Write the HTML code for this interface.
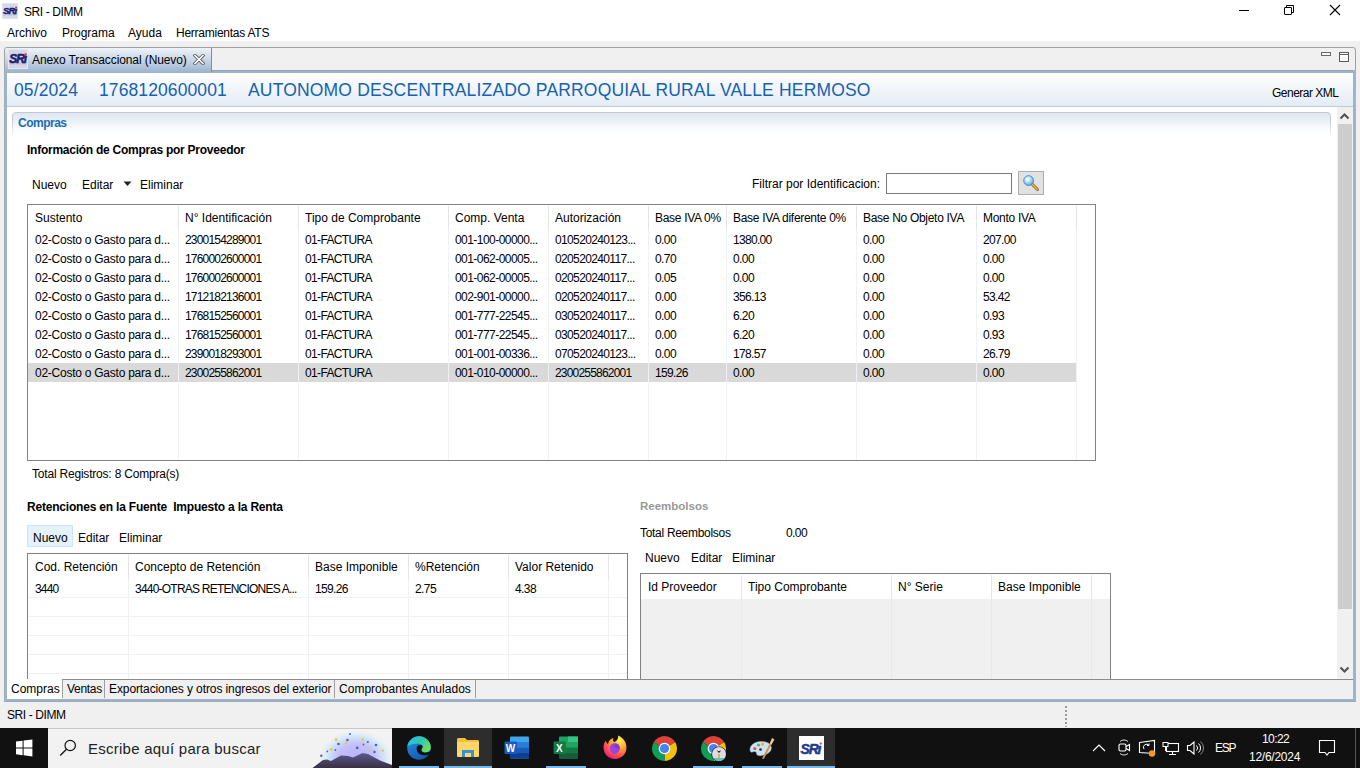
<!DOCTYPE html>
<html><head><meta charset="utf-8"><title>SRI - DIMM</title>
<style>
html,body{margin:0;padding:0;}
body{width:1360px;height:768px;position:relative;overflow:hidden;background:#f0f0f0;font-family:"Liberation Sans", sans-serif;}
.t{position:absolute;white-space:pre;font-family:"Liberation Sans", sans-serif;}
.b{position:absolute;}
</style></head><body>
<div class="b" style="left:0px;top:0px;width:1360px;height:41px;background:#fff"></div>
<svg class="b" style="left:2px;top:3px" width="16" height="16" viewBox="0 0 20 20"><rect x="0" y="0" width="20" height="20" fill="#d8d8e8"/><rect x="0.5" y="0.5" width="19" height="19" fill="none" stroke="#e6e6f2" stroke-width="1"/><rect x="1" y="13.5" width="18" height="2" fill="#c4c4dc"/><text x="1.3" y="13.6" font-family="Liberation Sans" font-weight="bold" font-style="italic" font-size="12" fill="#1c1f72" stroke="#1c1f72" stroke-width="0.55" letter-spacing="-1.1">SRı</text><circle cx="17.6" cy="5.6" r="1.3" fill="#d83838"/></svg>
<div class="t" style="left:24px;top:5.84px;font-size:12px;line-height:12px;font-weight:normal;color:#000;letter-spacing:-0.400px;">SRI - DIMM</div>
<div class="b" style="left:1239px;top:10px;width:10px;height:1px;background:#000"></div>
<svg class="b" style="left:1283px;top:4px" width="12" height="12" viewBox="0 0 12 12"><rect x="1.5" y="3.5" width="7" height="7" rx="0.5" fill="none" stroke="#000" stroke-width="1"/><path d="M3.5 3V1.5H10.5V8.5H9" fill="none" stroke="#000" stroke-width="1"/></svg>
<svg class="b" style="left:1329px;top:4px" width="12" height="12" viewBox="0 0 12 12"><path d="M1 1L11 11M11 1L1 11" fill="none" stroke="#000" stroke-width="1.1"/></svg>
<div class="t" style="left:7px;top:26.84px;font-size:12px;line-height:12px;font-weight:normal;color:#000;">Archivo</div>
<div class="t" style="left:62px;top:26.84px;font-size:12px;line-height:12px;font-weight:normal;color:#000;">Programa</div>
<div class="t" style="left:128px;top:26.84px;font-size:12px;line-height:12px;font-weight:normal;color:#000;">Ayuda</div>
<div class="t" style="left:176px;top:26.84px;font-size:12px;line-height:12px;font-weight:normal;color:#000;letter-spacing:-0.250px;">Herramientas ATS</div>
<div class="b" style="left:4px;top:47px;width:1352px;height:655px;border:1px solid #a0a0a0;border-radius:3px 3px 0 0;background:#f0f0f0;box-sizing:border-box"></div>
<div class="b" style="left:5px;top:70px;width:1350px;height:3px;background:linear-gradient(#94a3b6 0,#94a3b6 1px,#9eb3cc 1px)"></div>
<div class="b" style="left:5px;top:48px;width:206px;height:24px;background:linear-gradient(#eef3f9,#c4d4e6 55%,#9db4cf);border-right:1px solid #8a8a8a;border-radius:3px 0 0 0"></div>
<svg class="b" style="left:8px;top:49px" width="20" height="20" viewBox="0 0 20 20"><rect x="0" y="0" width="20" height="20" fill="#d6d6e2"/><rect x="0.5" y="0.5" width="19" height="19" fill="none" stroke="#e6e6f2" stroke-width="1"/><rect x="1" y="13.5" width="18" height="2" fill="#c4c4dc"/><text x="1.3" y="13.6" font-family="Liberation Sans" font-weight="bold" font-style="italic" font-size="12" fill="#1c1f72" stroke="#1c1f72" stroke-width="0.55" letter-spacing="-1.1">SRı</text><circle cx="17.6" cy="5.6" r="1.3" fill="#d83838"/></svg>
<div class="t" style="left:32px;top:53.84px;font-size:12px;line-height:12px;font-weight:normal;color:#000;letter-spacing:-0.100px;">Anexo Transaccional (Nuevo)</div>
<svg class="b" style="left:193px;top:54px" width="12" height="11" viewBox="0 0 12 11"><path d="M2 1.5L10 9.5M10 1.5L2 9.5" stroke="#555" stroke-width="3.2" stroke-linecap="square"/><path d="M2 1.5L10 9.5M10 1.5L2 9.5" stroke="#fff" stroke-width="1.6" stroke-linecap="square"/></svg>
<div class="b" style="left:1321px;top:52px;width:10px;height:4px;border:1px solid #6a6a6a;box-sizing:border-box;background:#f6f6f6"></div>
<div class="b" style="left:1339px;top:52px;width:10px;height:10px;border:1px solid #5a5a5a;box-sizing:border-box;background:linear-gradient(#fff 0,#fff 1px,#5a5a5a 1px,#5a5a5a 2px,#fff 2px)"></div>
<div class="b" style="left:4px;top:70px;width:3px;height:632px;background:#9eb3cc;border-left:1px solid #a3adb8;box-sizing:border-box"></div>
<div class="b" style="left:1353px;top:70px;width:3px;height:632px;background:#9eb3cc"></div>
<div class="b" style="left:4px;top:699px;width:1352px;height:3px;background:linear-gradient(#a4b6cc,#98a9be)"></div>
<div class="b" style="left:7px;top:73px;width:1346px;height:626px;background:#fff"></div>
<div class="b" style="left:7px;top:73px;width:1346px;height:33px;background:linear-gradient(#ffffff,#f4f7fb 40%,#e4ebf3)"></div>
<div class="b" style="left:7px;top:106px;width:1346px;height:1px;background:#c0ccda"></div>
<div class="t" style="left:14px;top:82.19px;font-size:17.5px;line-height:17.5px;font-weight:normal;color:#1562b0;letter-spacing:0.100px;">05/2024</div>
<div class="t" style="left:99px;top:82.19px;font-size:17.5px;line-height:17.5px;font-weight:normal;color:#1562b0;letter-spacing:0.100px;">1768120600001</div>
<div class="t" style="left:248px;top:82.19px;font-size:17.5px;line-height:17.5px;font-weight:normal;color:#1562b0;letter-spacing:0.170px;">AUTONOMO DESCENTRALIZADO PARROQUIAL RURAL VALLE HERMOSO</div>
<div class="t" style="left:1272px;top:86.84px;font-size:12px;line-height:12px;font-weight:normal;color:#000;letter-spacing:-0.500px;">Generar XML</div>
<div class="b" style="left:1337px;top:107px;width:16px;height:572px;background:#f0f0f0"></div>
<div class="b" style="left:1338px;top:124px;width:14px;height:485px;background:#cdcdcd"></div>
<svg class="b" style="left:1339px;top:112px" width="11" height="8" viewBox="0 0 11 8"><path d="M1.5 6.5L5.5 2.5L9.5 6.5" fill="none" stroke="#505050" stroke-width="2"/></svg>
<svg class="b" style="left:1339px;top:666px" width="11" height="8" viewBox="0 0 11 8"><path d="M1.5 1.5L5.5 5.5L9.5 1.5" fill="none" stroke="#505050" stroke-width="2"/></svg>
<div class="b" style="left:12px;top:112px;width:1319px;height:26px;border:1px solid #bfc9d6;border-bottom:none;border-radius:4px 4px 0 0;background:linear-gradient(#dfe7f0,#ffffff);box-sizing:border-box;-webkit-mask-image:linear-gradient(#000 30%,transparent);mask-image:linear-gradient(#000 30%,transparent)"></div>
<div class="t" style="left:18px;top:116.84px;font-size:12px;line-height:12px;font-weight:bold;color:#1a6cb5;letter-spacing:-0.500px;">Compras</div>
<div class="t" style="left:27px;top:143.84px;font-size:12px;line-height:12px;font-weight:bold;color:#000;letter-spacing:-0.250px;">Información de Compras por Proveedor</div>
<div class="t" style="left:32px;top:178.84px;font-size:12px;line-height:12px;font-weight:normal;color:#000;">Nuevo</div>
<div class="t" style="left:82px;top:178.84px;font-size:12px;line-height:12px;font-weight:normal;color:#000;">Editar</div>
<svg class="b" style="left:123px;top:181px" width="9" height="6" viewBox="0 0 9 6"><path d="M0.5 0.5h8L4.5 5z" fill="#222"/></svg>
<div class="t" style="left:140px;top:178.84px;font-size:12px;line-height:12px;font-weight:normal;color:#000;">Eliminar</div>
<div class="t" style="left:752px;top:177.84px;font-size:12px;line-height:12px;font-weight:normal;color:#000;">Filtrar por Identificacion:</div>
<div class="b" style="left:886px;top:173px;width:126px;height:21px;border:1px solid #7a7a7a;background:#fff;box-sizing:border-box"></div>
<div class="b" style="left:1018px;top:171px;width:26px;height:24px;border:1px solid #adadad;background:#e1e1e1;box-sizing:border-box"></div>
<svg class="b" style="left:1019px;top:172px" width="24" height="22" viewBox="0 0 24 22"><defs><radialGradient id="gl" cx="0.4" cy="0.35" r="0.7"><stop offset="0" stop-color="#ffffff"/><stop offset="0.5" stop-color="#a8dcf8"/><stop offset="1" stop-color="#4a9ad8"/></radialGradient></defs><line x1="13.5" y1="12.5" x2="18.5" y2="17.5" stroke="#8a5a20" stroke-width="3" stroke-linecap="round"/><line x1="13.5" y1="12.5" x2="18.5" y2="17.5" stroke="#f0b050" stroke-width="1.6" stroke-linecap="round"/><circle cx="9.6" cy="8.6" r="4.9" fill="url(#gl)" stroke="#4a8ac4" stroke-width="1"/></svg>
<div class="b" style="left:27px;top:204px;width:1069px;height:257px;border:1px solid #828282;background:#fff;box-sizing:border-box"></div>
<div class="b" style="left:28px;top:363px;width:1048px;height:19px;background:#d9d9d9"></div>
<div class="b" style="left:178px;top:206px;width:1px;height:24px;background:#e5e5e5"></div>
<div class="b" style="left:178px;top:230px;width:1px;height:230px;background:#eef2f7"></div>
<div class="b" style="left:298px;top:206px;width:1px;height:24px;background:#e5e5e5"></div>
<div class="b" style="left:298px;top:230px;width:1px;height:230px;background:#eef2f7"></div>
<div class="b" style="left:448px;top:206px;width:1px;height:24px;background:#e5e5e5"></div>
<div class="b" style="left:448px;top:230px;width:1px;height:230px;background:#eef2f7"></div>
<div class="b" style="left:548px;top:206px;width:1px;height:24px;background:#e5e5e5"></div>
<div class="b" style="left:548px;top:230px;width:1px;height:230px;background:#eef2f7"></div>
<div class="b" style="left:648px;top:206px;width:1px;height:24px;background:#e5e5e5"></div>
<div class="b" style="left:648px;top:230px;width:1px;height:230px;background:#eef2f7"></div>
<div class="b" style="left:726px;top:206px;width:1px;height:24px;background:#e5e5e5"></div>
<div class="b" style="left:726px;top:230px;width:1px;height:230px;background:#eef2f7"></div>
<div class="b" style="left:856px;top:206px;width:1px;height:24px;background:#e5e5e5"></div>
<div class="b" style="left:856px;top:230px;width:1px;height:230px;background:#eef2f7"></div>
<div class="b" style="left:976px;top:206px;width:1px;height:24px;background:#e5e5e5"></div>
<div class="b" style="left:976px;top:230px;width:1px;height:230px;background:#eef2f7"></div>
<div class="b" style="left:1076px;top:206px;width:1px;height:24px;background:#e5e5e5"></div>
<div class="b" style="left:1076px;top:230px;width:1px;height:230px;background:#eef2f7"></div>
<div class="t" style="left:35px;top:211.84px;font-size:12px;line-height:12px;font-weight:normal;color:#000;">Sustento</div>
<div class="t" style="left:185px;top:211.84px;font-size:12px;line-height:12px;font-weight:normal;color:#000;">N° Identificación</div>
<div class="t" style="left:305px;top:211.84px;font-size:12px;line-height:12px;font-weight:normal;color:#000;">Tipo de Comprobante</div>
<div class="t" style="left:455px;top:211.84px;font-size:12px;line-height:12px;font-weight:normal;color:#000;">Comp. Venta</div>
<div class="t" style="left:555px;top:211.84px;font-size:12px;line-height:12px;font-weight:normal;color:#000;">Autorización</div>
<div class="t" style="left:655px;top:211.84px;font-size:12px;line-height:12px;font-weight:normal;color:#000;letter-spacing:-0.300px;">Base IVA 0%</div>
<div class="t" style="left:733px;top:211.84px;font-size:12px;line-height:12px;font-weight:normal;color:#000;letter-spacing:-0.300px;">Base IVA diferente 0%</div>
<div class="t" style="left:863px;top:211.84px;font-size:12px;line-height:12px;font-weight:normal;color:#000;letter-spacing:-0.300px;">Base No Objeto IVA</div>
<div class="t" style="left:983px;top:211.84px;font-size:12px;line-height:12px;font-weight:normal;color:#000;letter-spacing:-0.300px;">Monto IVA</div>
<div class="t" style="left:35px;top:233.84px;font-size:12px;line-height:12px;font-weight:normal;color:#000;letter-spacing:-0.250px;">02-Costo o Gasto para d...</div>
<div class="t" style="left:185px;top:233.84px;font-size:12px;line-height:12px;font-weight:normal;color:#000;letter-spacing:-0.800px;">2300154289001</div>
<div class="t" style="left:305px;top:233.84px;font-size:12px;line-height:12px;font-weight:normal;color:#000;letter-spacing:-0.650px;">01-FACTURA</div>
<div class="t" style="left:455px;top:233.84px;font-size:12px;line-height:12px;font-weight:normal;color:#000;letter-spacing:-0.550px;">001-100-00000...</div>
<div class="t" style="left:555px;top:233.84px;font-size:12px;line-height:12px;font-weight:normal;color:#000;letter-spacing:-0.640px;">010520240123...</div>
<div class="t" style="left:655px;top:233.84px;font-size:12px;line-height:12px;font-weight:normal;color:#000;letter-spacing:-0.600px;">0.00</div>
<div class="t" style="left:733px;top:233.84px;font-size:12px;line-height:12px;font-weight:normal;color:#000;letter-spacing:-0.686px;">1380.00</div>
<div class="t" style="left:863px;top:233.84px;font-size:12px;line-height:12px;font-weight:normal;color:#000;letter-spacing:-0.600px;">0.00</div>
<div class="t" style="left:983px;top:233.84px;font-size:12px;line-height:12px;font-weight:normal;color:#000;letter-spacing:-0.667px;">207.00</div>
<div class="t" style="left:35px;top:252.84px;font-size:12px;line-height:12px;font-weight:normal;color:#000;letter-spacing:-0.250px;">02-Costo o Gasto para d...</div>
<div class="t" style="left:185px;top:252.84px;font-size:12px;line-height:12px;font-weight:normal;color:#000;letter-spacing:-0.800px;">1760002600001</div>
<div class="t" style="left:305px;top:252.84px;font-size:12px;line-height:12px;font-weight:normal;color:#000;letter-spacing:-0.650px;">01-FACTURA</div>
<div class="t" style="left:455px;top:252.84px;font-size:12px;line-height:12px;font-weight:normal;color:#000;letter-spacing:-0.550px;">001-062-00005...</div>
<div class="t" style="left:555px;top:252.84px;font-size:12px;line-height:12px;font-weight:normal;color:#000;letter-spacing:-0.640px;">020520240117...</div>
<div class="t" style="left:655px;top:252.84px;font-size:12px;line-height:12px;font-weight:normal;color:#000;letter-spacing:-0.600px;">0.70</div>
<div class="t" style="left:733px;top:252.84px;font-size:12px;line-height:12px;font-weight:normal;color:#000;letter-spacing:-0.600px;">0.00</div>
<div class="t" style="left:863px;top:252.84px;font-size:12px;line-height:12px;font-weight:normal;color:#000;letter-spacing:-0.600px;">0.00</div>
<div class="t" style="left:983px;top:252.84px;font-size:12px;line-height:12px;font-weight:normal;color:#000;letter-spacing:-0.600px;">0.00</div>
<div class="t" style="left:35px;top:271.84px;font-size:12px;line-height:12px;font-weight:normal;color:#000;letter-spacing:-0.250px;">02-Costo o Gasto para d...</div>
<div class="t" style="left:185px;top:271.84px;font-size:12px;line-height:12px;font-weight:normal;color:#000;letter-spacing:-0.800px;">1760002600001</div>
<div class="t" style="left:305px;top:271.84px;font-size:12px;line-height:12px;font-weight:normal;color:#000;letter-spacing:-0.650px;">01-FACTURA</div>
<div class="t" style="left:455px;top:271.84px;font-size:12px;line-height:12px;font-weight:normal;color:#000;letter-spacing:-0.550px;">001-062-00005...</div>
<div class="t" style="left:555px;top:271.84px;font-size:12px;line-height:12px;font-weight:normal;color:#000;letter-spacing:-0.640px;">020520240117...</div>
<div class="t" style="left:655px;top:271.84px;font-size:12px;line-height:12px;font-weight:normal;color:#000;letter-spacing:-0.600px;">0.05</div>
<div class="t" style="left:733px;top:271.84px;font-size:12px;line-height:12px;font-weight:normal;color:#000;letter-spacing:-0.600px;">0.00</div>
<div class="t" style="left:863px;top:271.84px;font-size:12px;line-height:12px;font-weight:normal;color:#000;letter-spacing:-0.600px;">0.00</div>
<div class="t" style="left:983px;top:271.84px;font-size:12px;line-height:12px;font-weight:normal;color:#000;letter-spacing:-0.600px;">0.00</div>
<div class="t" style="left:35px;top:290.84px;font-size:12px;line-height:12px;font-weight:normal;color:#000;letter-spacing:-0.250px;">02-Costo o Gasto para d...</div>
<div class="t" style="left:185px;top:290.84px;font-size:12px;line-height:12px;font-weight:normal;color:#000;letter-spacing:-0.800px;">1712182136001</div>
<div class="t" style="left:305px;top:290.84px;font-size:12px;line-height:12px;font-weight:normal;color:#000;letter-spacing:-0.650px;">01-FACTURA</div>
<div class="t" style="left:455px;top:290.84px;font-size:12px;line-height:12px;font-weight:normal;color:#000;letter-spacing:-0.550px;">002-901-00000...</div>
<div class="t" style="left:555px;top:290.84px;font-size:12px;line-height:12px;font-weight:normal;color:#000;letter-spacing:-0.640px;">020520240117...</div>
<div class="t" style="left:655px;top:290.84px;font-size:12px;line-height:12px;font-weight:normal;color:#000;letter-spacing:-0.600px;">0.00</div>
<div class="t" style="left:733px;top:290.84px;font-size:12px;line-height:12px;font-weight:normal;color:#000;letter-spacing:-0.667px;">356.13</div>
<div class="t" style="left:863px;top:290.84px;font-size:12px;line-height:12px;font-weight:normal;color:#000;letter-spacing:-0.600px;">0.00</div>
<div class="t" style="left:983px;top:290.84px;font-size:12px;line-height:12px;font-weight:normal;color:#000;letter-spacing:-0.640px;">53.42</div>
<div class="t" style="left:35px;top:309.84px;font-size:12px;line-height:12px;font-weight:normal;color:#000;letter-spacing:-0.250px;">02-Costo o Gasto para d...</div>
<div class="t" style="left:185px;top:309.84px;font-size:12px;line-height:12px;font-weight:normal;color:#000;letter-spacing:-0.800px;">1768152560001</div>
<div class="t" style="left:305px;top:309.84px;font-size:12px;line-height:12px;font-weight:normal;color:#000;letter-spacing:-0.650px;">01-FACTURA</div>
<div class="t" style="left:455px;top:309.84px;font-size:12px;line-height:12px;font-weight:normal;color:#000;letter-spacing:-0.550px;">001-777-22545...</div>
<div class="t" style="left:555px;top:309.84px;font-size:12px;line-height:12px;font-weight:normal;color:#000;letter-spacing:-0.640px;">030520240117...</div>
<div class="t" style="left:655px;top:309.84px;font-size:12px;line-height:12px;font-weight:normal;color:#000;letter-spacing:-0.600px;">0.00</div>
<div class="t" style="left:733px;top:309.84px;font-size:12px;line-height:12px;font-weight:normal;color:#000;letter-spacing:-0.600px;">6.20</div>
<div class="t" style="left:863px;top:309.84px;font-size:12px;line-height:12px;font-weight:normal;color:#000;letter-spacing:-0.600px;">0.00</div>
<div class="t" style="left:983px;top:309.84px;font-size:12px;line-height:12px;font-weight:normal;color:#000;letter-spacing:-0.600px;">0.93</div>
<div class="t" style="left:35px;top:328.84px;font-size:12px;line-height:12px;font-weight:normal;color:#000;letter-spacing:-0.250px;">02-Costo o Gasto para d...</div>
<div class="t" style="left:185px;top:328.84px;font-size:12px;line-height:12px;font-weight:normal;color:#000;letter-spacing:-0.800px;">1768152560001</div>
<div class="t" style="left:305px;top:328.84px;font-size:12px;line-height:12px;font-weight:normal;color:#000;letter-spacing:-0.650px;">01-FACTURA</div>
<div class="t" style="left:455px;top:328.84px;font-size:12px;line-height:12px;font-weight:normal;color:#000;letter-spacing:-0.550px;">001-777-22545...</div>
<div class="t" style="left:555px;top:328.84px;font-size:12px;line-height:12px;font-weight:normal;color:#000;letter-spacing:-0.640px;">030520240117...</div>
<div class="t" style="left:655px;top:328.84px;font-size:12px;line-height:12px;font-weight:normal;color:#000;letter-spacing:-0.600px;">0.00</div>
<div class="t" style="left:733px;top:328.84px;font-size:12px;line-height:12px;font-weight:normal;color:#000;letter-spacing:-0.600px;">6.20</div>
<div class="t" style="left:863px;top:328.84px;font-size:12px;line-height:12px;font-weight:normal;color:#000;letter-spacing:-0.600px;">0.00</div>
<div class="t" style="left:983px;top:328.84px;font-size:12px;line-height:12px;font-weight:normal;color:#000;letter-spacing:-0.600px;">0.93</div>
<div class="t" style="left:35px;top:347.84px;font-size:12px;line-height:12px;font-weight:normal;color:#000;letter-spacing:-0.250px;">02-Costo o Gasto para d...</div>
<div class="t" style="left:185px;top:347.84px;font-size:12px;line-height:12px;font-weight:normal;color:#000;letter-spacing:-0.800px;">2390018293001</div>
<div class="t" style="left:305px;top:347.84px;font-size:12px;line-height:12px;font-weight:normal;color:#000;letter-spacing:-0.650px;">01-FACTURA</div>
<div class="t" style="left:455px;top:347.84px;font-size:12px;line-height:12px;font-weight:normal;color:#000;letter-spacing:-0.550px;">001-001-00336...</div>
<div class="t" style="left:555px;top:347.84px;font-size:12px;line-height:12px;font-weight:normal;color:#000;letter-spacing:-0.640px;">070520240123...</div>
<div class="t" style="left:655px;top:347.84px;font-size:12px;line-height:12px;font-weight:normal;color:#000;letter-spacing:-0.600px;">0.00</div>
<div class="t" style="left:733px;top:347.84px;font-size:12px;line-height:12px;font-weight:normal;color:#000;letter-spacing:-0.667px;">178.57</div>
<div class="t" style="left:863px;top:347.84px;font-size:12px;line-height:12px;font-weight:normal;color:#000;letter-spacing:-0.600px;">0.00</div>
<div class="t" style="left:983px;top:347.84px;font-size:12px;line-height:12px;font-weight:normal;color:#000;letter-spacing:-0.640px;">26.79</div>
<div class="t" style="left:35px;top:366.84px;font-size:12px;line-height:12px;font-weight:normal;color:#000;letter-spacing:-0.250px;">02-Costo o Gasto para d...</div>
<div class="t" style="left:185px;top:366.84px;font-size:12px;line-height:12px;font-weight:normal;color:#000;letter-spacing:-0.800px;">2300255862001</div>
<div class="t" style="left:305px;top:366.84px;font-size:12px;line-height:12px;font-weight:normal;color:#000;letter-spacing:-0.650px;">01-FACTURA</div>
<div class="t" style="left:455px;top:366.84px;font-size:12px;line-height:12px;font-weight:normal;color:#000;letter-spacing:-0.550px;">001-010-00000...</div>
<div class="t" style="left:555px;top:366.84px;font-size:12px;line-height:12px;font-weight:normal;color:#000;letter-spacing:-0.800px;">2300255862001</div>
<div class="t" style="left:655px;top:366.84px;font-size:12px;line-height:12px;font-weight:normal;color:#000;letter-spacing:-0.667px;">159.26</div>
<div class="t" style="left:733px;top:366.84px;font-size:12px;line-height:12px;font-weight:normal;color:#000;letter-spacing:-0.600px;">0.00</div>
<div class="t" style="left:863px;top:366.84px;font-size:12px;line-height:12px;font-weight:normal;color:#000;letter-spacing:-0.600px;">0.00</div>
<div class="t" style="left:983px;top:366.84px;font-size:12px;line-height:12px;font-weight:normal;color:#000;letter-spacing:-0.600px;">0.00</div>
<div class="t" style="left:32px;top:467.84px;font-size:12px;line-height:12px;font-weight:normal;color:#000;letter-spacing:-0.200px;">Total Registros: 8 Compra(s)</div>
<div class="t" style="left:27px;top:500.84px;font-size:12px;line-height:12px;font-weight:bold;color:#000;letter-spacing:-0.200px;">Retenciones en la Fuente&nbsp; Impuesto a la Renta</div>
<div class="b" style="left:27px;top:525px;width:46px;height:22px;background:#e5f1fb;border:1px solid #cce4f7;box-sizing:border-box"></div>
<div class="t" style="left:33px;top:531.84px;font-size:12px;line-height:12px;font-weight:normal;color:#000;">Nuevo</div>
<div class="t" style="left:78px;top:531.84px;font-size:12px;line-height:12px;font-weight:normal;color:#000;">Editar</div>
<div class="t" style="left:119px;top:531.84px;font-size:12px;line-height:12px;font-weight:normal;color:#000;">Eliminar</div>
<div class="b" style="left:27px;top:553px;width:601px;height:130px;border:1px solid #828282;border-bottom:none;background:#fff;box-sizing:border-box"></div>
<div class="b" style="left:128px;top:555px;width:1px;height:24px;background:#e5e5e5"></div>
<div class="b" style="left:128px;top:579px;width:1px;height:100px;background:#eef2f7"></div>
<div class="b" style="left:308px;top:555px;width:1px;height:24px;background:#e5e5e5"></div>
<div class="b" style="left:308px;top:579px;width:1px;height:100px;background:#eef2f7"></div>
<div class="b" style="left:408px;top:555px;width:1px;height:24px;background:#e5e5e5"></div>
<div class="b" style="left:408px;top:579px;width:1px;height:100px;background:#eef2f7"></div>
<div class="b" style="left:508px;top:555px;width:1px;height:24px;background:#e5e5e5"></div>
<div class="b" style="left:508px;top:579px;width:1px;height:100px;background:#eef2f7"></div>
<div class="b" style="left:608px;top:555px;width:1px;height:24px;background:#e5e5e5"></div>
<div class="b" style="left:608px;top:579px;width:1px;height:100px;background:#eef2f7"></div>
<div class="b" style="left:28px;top:597px;width:599px;height:1px;background:#eef2f7"></div>
<div class="b" style="left:28px;top:616px;width:599px;height:1px;background:#eef2f7"></div>
<div class="b" style="left:28px;top:635px;width:599px;height:1px;background:#eef2f7"></div>
<div class="b" style="left:28px;top:654px;width:599px;height:1px;background:#eef2f7"></div>
<div class="b" style="left:28px;top:673px;width:599px;height:1px;background:#eef2f7"></div>
<div class="t" style="left:35px;top:560.84px;font-size:12px;line-height:12px;font-weight:normal;color:#000;">Cod. Retención</div>
<div class="t" style="left:135px;top:560.84px;font-size:12px;line-height:12px;font-weight:normal;color:#000;">Concepto de Retención</div>
<div class="t" style="left:315px;top:560.84px;font-size:12px;line-height:12px;font-weight:normal;color:#000;">Base Imponible</div>
<div class="t" style="left:415px;top:560.84px;font-size:12px;line-height:12px;font-weight:normal;color:#000;">%Retención</div>
<div class="t" style="left:515px;top:560.84px;font-size:12px;line-height:12px;font-weight:normal;color:#000;">Valor Retenido</div>
<div class="t" style="left:35px;top:582.84px;font-size:12px;line-height:12px;font-weight:normal;color:#000;letter-spacing:-0.800px;">3440</div>
<div class="t" style="left:135px;top:582.84px;font-size:12px;line-height:12px;font-weight:normal;color:#000;letter-spacing:-0.780px;">3440-OTRAS RETENCIONES A...</div>
<div class="t" style="left:315px;top:582.84px;font-size:12px;line-height:12px;font-weight:normal;color:#000;letter-spacing:-0.667px;">159.26</div>
<div class="t" style="left:415px;top:582.84px;font-size:12px;line-height:12px;font-weight:normal;color:#000;letter-spacing:-0.600px;">2.75</div>
<div class="t" style="left:515px;top:582.84px;font-size:12px;line-height:12px;font-weight:normal;color:#000;letter-spacing:-0.600px;">4.38</div>
<div class="t" style="left:640px;top:501.27px;font-size:11.5px;line-height:11.5px;font-weight:bold;color:#989898;">Reembolsos</div>
<div class="t" style="left:640px;top:526.84px;font-size:12px;line-height:12px;font-weight:normal;color:#000;letter-spacing:-0.300px;">Total Reembolsos</div>
<div class="t" style="left:786px;top:526.84px;font-size:12px;line-height:12px;font-weight:normal;color:#000;letter-spacing:-0.600px;">0.00</div>
<div class="t" style="left:645px;top:551.84px;font-size:12px;line-height:12px;font-weight:normal;color:#000;">Nuevo</div>
<div class="t" style="left:691px;top:551.84px;font-size:12px;line-height:12px;font-weight:normal;color:#000;">Editar</div>
<div class="t" style="left:732px;top:551.84px;font-size:12px;line-height:12px;font-weight:normal;color:#000;">Eliminar</div>
<div class="b" style="left:640px;top:573px;width:471px;height:110px;border:1px solid #828282;border-bottom:none;background:#fff;box-sizing:border-box"></div>
<div class="b" style="left:641px;top:599px;width:469px;height:80px;background:#f0f0f0"></div>
<div class="b" style="left:741px;top:575px;width:1px;height:24px;background:#e5e5e5"></div>
<div class="b" style="left:741px;top:599px;width:1px;height:80px;background:#e4e9f0"></div>
<div class="b" style="left:891px;top:575px;width:1px;height:24px;background:#e5e5e5"></div>
<div class="b" style="left:891px;top:599px;width:1px;height:80px;background:#e4e9f0"></div>
<div class="b" style="left:991px;top:575px;width:1px;height:24px;background:#e5e5e5"></div>
<div class="b" style="left:991px;top:599px;width:1px;height:80px;background:#e4e9f0"></div>
<div class="b" style="left:1091px;top:575px;width:1px;height:24px;background:#e5e5e5"></div>
<div class="b" style="left:1091px;top:599px;width:1px;height:80px;background:#e4e9f0"></div>
<div class="t" style="left:648px;top:580.84px;font-size:12px;line-height:12px;font-weight:normal;color:#000;">Id Proveedor</div>
<div class="t" style="left:748px;top:580.84px;font-size:12px;line-height:12px;font-weight:normal;color:#000;">Tipo Comprobante</div>
<div class="t" style="left:898px;top:580.84px;font-size:12px;line-height:12px;font-weight:normal;color:#000;">N° Serie</div>
<div class="t" style="left:998px;top:580.84px;font-size:12px;line-height:12px;font-weight:normal;color:#000;">Base Imponible</div>
<div class="b" style="left:7px;top:679px;width:1346px;height:20px;background:#f0f0f0"></div>
<div class="b" style="left:62px;top:679px;width:1291px;height:1px;background:#8c8c8c"></div>
<div class="b" style="left:7px;top:679px;width:55px;height:20px;background:#fff"></div>
<div class="b" style="left:62px;top:680px;width:1px;height:18px;background:#a0a0a0"></div>
<div class="b" style="left:104px;top:680px;width:1px;height:18px;background:#a0a0a0"></div>
<div class="b" style="left:334px;top:680px;width:1px;height:18px;background:#a0a0a0"></div>
<div class="b" style="left:475px;top:680px;width:1px;height:18px;background:#a0a0a0"></div>
<div class="t" style="left:11px;top:682.84px;font-size:12px;line-height:12px;font-weight:normal;color:#000;">Compras</div>
<div class="t" style="left:67px;top:682.84px;font-size:12px;line-height:12px;font-weight:normal;color:#000;letter-spacing:-0.300px;">Ventas</div>
<div class="t" style="left:109px;top:682.84px;font-size:12px;line-height:12px;font-weight:normal;color:#000;letter-spacing:-0.100px;">Exportaciones y otros ingresos del exterior</div>
<div class="t" style="left:339px;top:682.84px;font-size:12px;line-height:12px;font-weight:normal;color:#000;letter-spacing:0.020px;">Comprobantes Anulados</div>
<div class="t" style="left:7px;top:708.84px;font-size:12px;line-height:12px;font-weight:normal;color:#000;letter-spacing:-0.400px;">SRI - DIMM</div>
<div class="b" style="left:1065px;top:704px;width:2px;height:23px;background:repeating-linear-gradient(#f0f0f0 0,#f0f0f0 2px,#9a9a9a 2px,#9a9a9a 4px)"></div>
<div class="b" style="left:0px;top:728px;width:1360px;height:40px;background:#111111"></div>
<svg class="b" style="left:15px;top:739px" width="18" height="18" viewBox="0 0 18 18"><path d="M1 2.6L7.6 1.7V8.4H1Z M8.6 1.55L17.4 0.4V8.4H8.6Z M1 9.4H7.6V16.2L1 15.3Z M8.6 9.4H17.4V17.5L8.6 16.3Z" fill="#fff"/></svg>
<div class="b" style="left:48px;top:728px;width:344px;height:40px;background:#f2f2f2;border-top:1px solid #c8c8c8;box-sizing:border-box"></div>
<svg class="b" style="left:58px;top:738px" width="20" height="20" viewBox="0 0 20 20"><circle cx="12.2" cy="7.5" r="5.2" fill="none" stroke="#111" stroke-width="1.2"/><path d="M8.5 11.2L2.2 17.5" stroke="#111" stroke-width="1.3"/></svg>
<div class="t" style="left:88px;top:741.30px;font-size:15px;line-height:15px;font-weight:normal;color:#222;letter-spacing:0.250px;">Escribe aquí para buscar</div>
<svg class="b" style="left:310px;top:729px" width="82" height="39" viewBox="0 0 82 39"><defs><radialGradient id="glow" cx="0.5" cy="0.5" r="0.5"><stop offset="0" stop-color="#b8b0fa"/><stop offset="0.5" stop-color="#c4c0fa"/><stop offset="0.78" stop-color="#d4eaf8"/><stop offset="1" stop-color="#f2f2f2" stop-opacity="0"/></radialGradient><linearGradient id="mt" x1="0" y1="0" x2="0" y2="1"><stop offset="0" stop-color="#5a5a90"/><stop offset="1" stop-color="#3a3040"/></linearGradient></defs><ellipse cx="46" cy="30" rx="38" ry="30" fill="url(#glow)"/><path d="M2.5 39L13 31L17 30.5L21 32L31 26.5L38 27L43 28.5L52.5 24L58 25L70 31.5L82 36V39Z" fill="url(#mt)"/><g fill="#3a58a8" opacity="0.9"><circle cx="11.3" cy="26.8" r="1.2"/><circle cx="17.3" cy="22.4" r="0.9"/><circle cx="28.5" cy="15" r="1.3"/><circle cx="37.4" cy="11" r="1.3"/><circle cx="47.2" cy="18.9" r="1.3"/><circle cx="53.5" cy="15.5" r="0.9"/><circle cx="57.8" cy="13" r="1.1"/><circle cx="66" cy="16" r="1.3"/><circle cx="64.5" cy="23" r="1.2"/><circle cx="25.4" cy="21" r="0.9"/><circle cx="40" cy="5" r="1"/></g><g fill="#e6c850"><circle cx="26" cy="10.6" r="1.4"/><circle cx="21" cy="20.5" r="1.4"/><circle cx="36" cy="14" r="1.3"/><circle cx="52.8" cy="10.6" r="1.4"/><circle cx="72.8" cy="21.6" r="1.3"/><circle cx="59" cy="19.8" r="0.9"/></g></svg>
<div class="b" style="left:444px;top:728px;width:48px;height:40px;background:#2d2d2d"></div>
<div class="b" style="left:787px;top:728px;width:48px;height:40px;background:#2d2d2d"></div>
<div class="b" style="left:399px;top:766px;width:40px;height:2px;background:#76b9ed"></div>
<div class="b" style="left:444px;top:766px;width:48px;height:2px;background:#76b9ed"></div>
<div class="b" style="left:546px;top:766px;width:40px;height:2px;background:#76b9ed"></div>
<div class="b" style="left:693px;top:766px;width:40px;height:2px;background:#76b9ed"></div>
<div class="b" style="left:742px;top:766px;width:40px;height:2px;background:#76b9ed"></div>
<div class="b" style="left:787px;top:766px;width:48px;height:2px;background:#76b9ed"></div>
<svg class="b" style="left:407px;top:736px" width="24" height="24" viewBox="0 0 24 24"><defs><linearGradient id="eg1" x1="0" y1="0" x2="1" y2="0.6"><stop offset="0" stop-color="#33b6f0"/><stop offset="0.55" stop-color="#2cc9b0"/><stop offset="1" stop-color="#6ae060"/></linearGradient><linearGradient id="eg2" x1="0" y1="0" x2="0.6" y2="1"><stop offset="0" stop-color="#2590e8"/><stop offset="1" stop-color="#1758b0"/></linearGradient></defs><circle cx="12" cy="12" r="11.8" fill="url(#eg2)"/><path d="M9.6 12.5C9.6 10 11.5 8.6 14 9C16 9.4 16.4 11 15.6 12.4C15 13.6 15.4 15.2 17.5 16C20 16.8 22.5 16.2 24 15L24 17.2C21.5 19.5 16.5 20 13 18.3C10.8 17.2 9.6 15 9.6 12.5Z" fill="#111"/><path d="M0.3 10.5C1.3 4.5 6.2 0.2 12 0.2C18.5 0.2 23.8 5.2 23.8 11.2C23.8 14.5 21.2 16.4 18.2 16.4C15.6 16.4 14 15 14.6 13.2C15 12 16 11.6 15.8 10.2C15.4 8.4 13 7.4 10 7.6C5.8 7.9 2.2 9.2 0.3 10.5Z" fill="url(#eg1)"/></svg>
<svg class="b" style="left:456px;top:737px" width="24" height="21" viewBox="0 0 24 21"><path d="M1 2.5C1 1.7 1.6 1 2.5 1H9L11 3H21.5C22.3 3 23 3.7 23 4.5V18.5C23 19.3 22.3 20 21.5 20H2.5C1.7 20 1 19.3 1 18.5Z" fill="#f0c040"/><path d="M1 5H23V18.5C23 19.3 22.3 20 21.5 20H2.5C1.7 20 1 19.3 1 18.5Z" fill="#ffd767"/><path d="M6 20V13H18V20H15V16H9V20Z" fill="#3a8fd6"/></svg>
<svg class="b" style="left:504px;top:736px" width="26" height="23" viewBox="0 0 26 23"><rect x="6" y="0.5" width="19" height="22" rx="1" fill="#41a5ee"/><rect x="6" y="6" width="19" height="5.5" fill="#2b7cd3"/><rect x="6" y="11.5" width="19" height="5.5" fill="#185abd"/><rect x="6" y="17" width="19" height="5.5" rx="1" fill="#103f91"/><rect x="0.5" y="5.5" width="12.5" height="12.5" rx="1" fill="#185abd"/><text x="1.8" y="15.5" font-family="Liberation Sans" font-weight="bold" font-size="10" fill="#fff">W</text></svg>
<svg class="b" style="left:553px;top:736px" width="26" height="23" viewBox="0 0 26 23"><rect x="6" y="0.5" width="19" height="22" rx="1" fill="#21a366"/><rect x="15" y="0.5" width="10" height="5.5" fill="#33c481"/><rect x="6" y="11.5" width="19" height="5.5" fill="#107c41"/><rect x="6" y="17" width="19" height="5.5" rx="1" fill="#185c37"/><rect x="0.5" y="5.5" width="12.5" height="12.5" rx="1" fill="#107c41"/><text x="3" y="15.5" font-family="Liberation Sans" font-weight="bold" font-size="10" fill="#fff">X</text></svg>
<svg class="b" style="left:602px;top:735px" width="26" height="25" viewBox="0 0 26 25"><defs><radialGradient id="ff1" cx="0.7" cy="0.2" r="0.9"><stop offset="0" stop-color="#fff44f"/><stop offset="0.45" stop-color="#ff9a2e"/><stop offset="0.8" stop-color="#ff3c5e"/><stop offset="1" stop-color="#e31587"/></radialGradient></defs><path d="M13 24C6.5 24 1.5 19 1.5 12.5C1.5 9.5 2.5 7 4 5.5C4 7.5 5 8.5 6 9C6.5 6 8.5 3.5 11.5 3C10.5 5 11 6.5 12.5 7C15 6 16.5 3.5 16 0.5C21 2.5 24.5 7 24.5 12.5C24.5 19 19.5 24 13 24Z" fill="url(#ff1)"/><circle cx="13" cy="13" r="4.8" fill="#7b3ad6"/><path d="M8 12C9 10 11 9 13.5 9.5C12 10.5 12 12 13.5 13C15.5 14 17.5 13 18 12C18 16 15.5 19 12.5 19C9.5 19 7.5 16 8 12Z" fill="#a13ee0"/></svg>
<svg class="b" style="left:652px;top:736px" width="25" height="25" viewBox="0 0 24 24"><path d="M12 12L1.61 6A12 12 0 0 1 22.39 6Z" fill="#db4437"/><path d="M12 12L22.39 6A12 12 0 0 1 12 24Z" fill="#f4c20d"/><path d="M12 12L12 24A12 12 0 0 1 1.61 6Z" fill="#0f9d58"/><circle cx="12" cy="12" r="5.6" fill="#fff"/><circle cx="12" cy="12" r="4.4" fill="#4285f4"/></svg>
<svg class="b" style="left:701px;top:736px" width="25" height="25" viewBox="0 0 24 24"><path d="M12 12L1.61 6A12 12 0 0 1 22.39 6Z" fill="#db4437"/><path d="M12 12L22.39 6A12 12 0 0 1 12 24Z" fill="#f4c20d"/><path d="M12 12L12 24A12 12 0 0 1 1.61 6Z" fill="#0f9d58"/><circle cx="12" cy="12" r="5.6" fill="#fff"/><circle cx="12" cy="12" r="4.4" fill="#4285f4"/></svg>
<svg class="b" style="left:711px;top:746px" width="16" height="16" viewBox="0 0 16 16"><defs><clipPath id="av"><circle cx="8" cy="8" r="7"/></clipPath></defs><circle cx="8" cy="8" r="7.6" fill="#111"/><g clip-path="url(#av)"><rect width="16" height="16" fill="#dcdce8"/><rect y="12" width="16" height="4" fill="#5cc4bc"/><path d="M5 12V8.5C5 7 6 6 8 6C10 6 11 7 11 8.5V12Z" fill="#e8dcc8"/><path d="M6 3.5L7 6.5H9L10 3.5L9 5H7Z" fill="#3a2a20"/><rect x="7.2" y="8" width="1.6" height="4" fill="#c8a880"/></g></svg>
<svg class="b" style="left:749px;top:735px" width="26" height="25" viewBox="0 0 26 25"><path d="M12 6.5C5.5 6.5 1 10.5 1 14.5C1 16.5 2 17.5 3.5 17C5 16.5 6 16 7 17C8 18 7 20 9.5 20.5C12 21 17 20 20 17.5C23 15 23 11 20 8.5C18 7 15 6.5 12 6.5Z" fill="#cfe2f2" stroke="#8fb0cc" stroke-width="0.6"/><circle cx="5.8" cy="13.5" r="1.6" fill="#e0504a"/><circle cx="9.5" cy="10" r="1.6" fill="#58b850"/><circle cx="13.5" cy="9.2" r="1.6" fill="#f0b040"/><circle cx="11.5" cy="14.5" r="1.3" fill="#1a2a3a"/><path d="M13 23.5L20.5 9L22.3 10L14.8 24Z" fill="#d8904a"/><path d="M20.5 9L23 3L25.5 4.5L22.3 10Z" fill="#f0c890"/></svg>
<svg class="b" style="left:799px;top:736px" width="25" height="24" viewBox="0 0 25 24"><rect width="25" height="24" fill="#fff"/><text x="1.5" y="17.5" font-family="Liberation Sans" font-weight="bold" font-style="italic" font-size="14" fill="#1d3c8f" stroke="#1d3c8f" stroke-width="0.5" letter-spacing="-1.2">SRı</text><circle cx="21.8" cy="7.6" r="1.1" fill="#d83838"/></svg>
<svg class="b" style="left:1092px;top:743px" width="14" height="9" viewBox="0 0 14 9"><path d="M1 8L7 2L13 8" fill="none" stroke="#fff" stroke-width="1.2"/></svg>
<svg class="b" style="left:1117px;top:739px" width="14" height="17" viewBox="0 0 14 17"><path d="M3 2.5A6 6 0 0 1 11 2.5 M3 14.5A6 6 0 0 0 11 14.5" fill="none" stroke="#ddd" stroke-width="1"/><rect x="2" y="5" width="7" height="7" rx="1.5" fill="none" stroke="#fff" stroke-width="1.1"/><path d="M9 7.5L12.5 5.5V11.5L9 9.5" fill="none" stroke="#fff" stroke-width="1.1"/></svg>
<svg class="b" style="left:1138px;top:739px" width="19" height="19" viewBox="0 0 19 19"><path d="M1.5 3.5L16.5 1.5V14.5L1.5 13.5Z" fill="none" stroke="#fff" stroke-width="1.1"/><path d="M6 10A3 3 0 0 1 11 6.5M11 6.5V4.5M11 6.5H9" fill="none" stroke="#fff" stroke-width="1"/><circle cx="14" cy="14.5" r="3.2" fill="#f79a1e"/></svg>
<svg class="b" style="left:1162px;top:742px" width="18" height="14" viewBox="0 0 18 14"><rect x="4.5" y="1.5" width="12" height="8" fill="none" stroke="#fff" stroke-width="1.1"/><path d="M10.5 9.5V12.5M7 12.5H14" stroke="#fff" stroke-width="1.1"/><rect x="1" y="0.5" width="5" height="4" fill="#111" stroke="#fff" stroke-width="1"/><path d="M3.5 4.5V9" stroke="#fff" stroke-width="1"/></svg>
<svg class="b" style="left:1186px;top:740px" width="18" height="16" viewBox="0 0 18 16"><path d="M1.5 5.5H4L8 2V14L4 10.5H1.5Z" fill="none" stroke="#fff" stroke-width="1.1"/><path d="M10.5 5.5A3.5 3.5 0 0 1 10.5 10.5 M12.5 3.5A6 6 0 0 1 12.5 12.5" fill="none" stroke="#fff" stroke-width="1"/><path d="M14.5 1.5A8.5 8.5 0 0 1 14.5 14.5" fill="none" stroke="#888" stroke-width="1"/></svg>
<div class="t" style="left:1215px;top:741.84px;font-size:12px;line-height:12px;font-weight:normal;color:#fff;letter-spacing:-1.200px;">ESP</div>
<div class="t" style="left:1262px;top:732.84px;font-size:12px;line-height:12px;font-weight:normal;color:#fff;letter-spacing:-0.600px;">10:22</div>
<div class="t" style="left:1249px;top:750.84px;font-size:12px;line-height:12px;font-weight:normal;color:#fff;letter-spacing:-0.250px;">12/6/2024</div>
<svg class="b" style="left:1318px;top:739px" width="18" height="18" viewBox="0 0 18 18"><path d="M1.5 1.5H16.5V13.5H11L9 16L7 13.5H1.5Z" fill="none" stroke="#fff" stroke-width="1.1"/></svg>
<div class="b" style="left:1355px;top:728px;width:1px;height:40px;background:#555"></div>
</body></html>
